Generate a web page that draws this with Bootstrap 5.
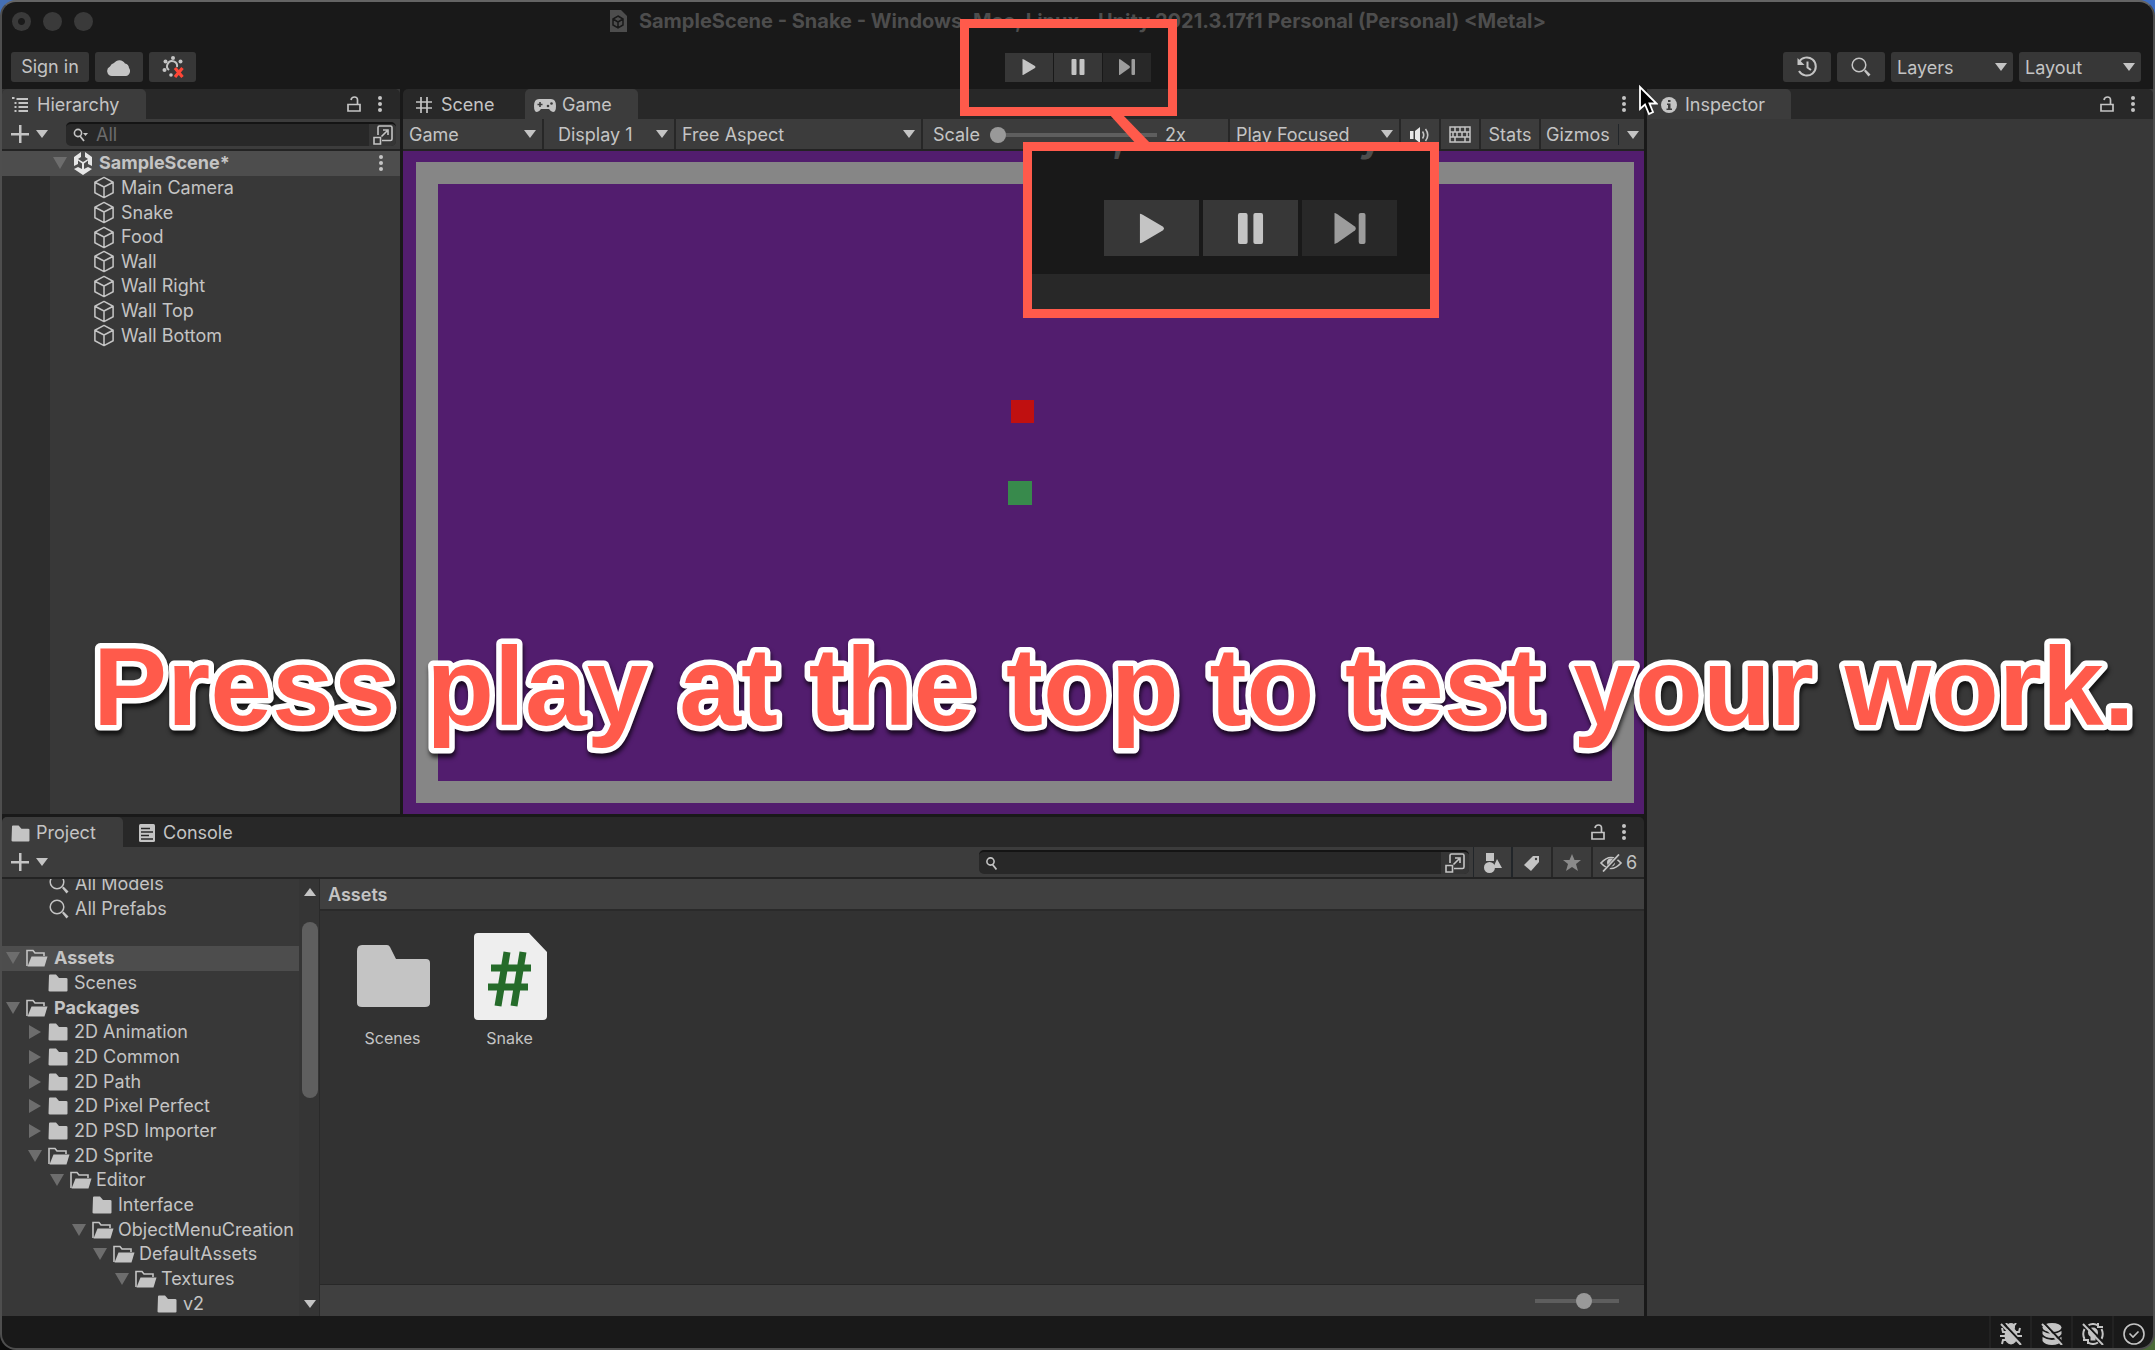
<!DOCTYPE html>
<html lang="en" data-bs-theme="dark">
<head>
<meta charset="utf-8">
<meta name="viewport" content="width=device-width, initial-scale=1">
<title>SampleScene - Snake - Unity Editor</title>
<link href="https://cdn.jsdelivr.net/npm/bootstrap@5.3.0/dist/css/bootstrap.min.css" rel="stylesheet">
<style>
:root{--ink:#c4c4c4;--panel:#383838;--bar:#3c3c3c;--dark:#191919;--strip:#282828;--accent:#ff5a4b}
body{font:18px/24px Inter,"Liberation Sans",sans-serif;color:var(--ink);height:100vh;overflow:hidden;
 background:linear-gradient(90deg,#4570b5 50%,#3f6fc4 50%) top/100% 50% no-repeat,linear-gradient(90deg,#0c0c0c 50%,#4b6a38 50%) bottom/100% 50% no-repeat}
svg{display:block;flex:none;fill:currentColor}
button,select,input{font:inherit;color:inherit;background:none;border:0;padding:0}
.window{height:100vh;background:var(--dark);border:2px solid #4e4e4e;border-top-color:#646464;border-radius:16px;overflow:hidden}
.titlebar{height:42px;display:grid;grid-template-columns:1fr auto 1fr;align-items:center;padding:0 10px 4px;font-weight:700;font-size:20px;color:#4d4d4d}
.dot{width:19px;height:19px;border-radius:50%;background:#3a3a3a}
.dot.edited{background:radial-gradient(#1a1a1a 3px,#3a3a3a 4px)}
.toolbar{height:45px;padding:8px 12px 7px 9px;display:grid;grid-template-columns:1fr auto 1fr;align-items:center}
.tool{height:30px;background:#373737;border-radius:3px;display:flex;align-items:center;justify-content:center}
.play{width:48px;height:29px;background:#373737;display:flex;align-items:center;justify-content:center}
.play.off{background:var(--strip);color:#9c9c9c}
.transport{gap:1px;margin-left:4px}
.gutter{gap:3px}
.tabs{height:30px;background:var(--strip);border-radius:5px 5px 0 0;padding-right:17px}
.tabitem{height:30px;display:flex;align-items:center;gap:9px;border-radius:5px 5px 0 0;padding-top:2px}
.tabitem.on{background:var(--bar)}
.controls{height:32px;background:var(--bar);border-bottom:2px solid #232323}
.controls>.seg{height:30px;display:flex;align-items:center;border-right:2px solid #272727;padding-top:1px}
.controls>.seg:last-child{border-right:0}
.pick{position:relative;display:flex;align-items:center}
.pick select{appearance:none;width:100%;height:30px;padding:1px 0 0 6px;line-height:24px}
.pick::after,.caret{content:"";border:6px solid transparent;border-top:8px solid var(--ink);border-bottom:0}
.pick::after{position:absolute;right:6px;top:11px;pointer-events:none}
.find{height:24px;background:#282828;border-radius:5px;border-top:2px solid #141414;overflow:hidden}
.find input{outline:0;min-width:0}
.find input::placeholder{color:#6c6c6c;opacity:1}
.find button{width:28px;height:24px;background:#353535;display:flex;align-items:center;justify-content:center}
.hierarchy{width:398px;background:var(--panel)}
.rows{list-style:none;margin:0;padding:0;display:flex;flex-direction:column}
.rows li{flex:1 1 0;min-height:0;display:flex;align-items:center;gap:6px;white-space:nowrap}
.rows .chosen{background:#4d4d4d}
.scenelist{height:197px}
.scenelist .obj{padding-left:91px}
.visibility{width:48px;background:#2d2d2d}
.fold{width:14px;height:14px;color:#6d6d6d}
.openf{margin-right:-2px}
.stage{background:#521d6e;padding:11px 10px 11px 13px}
.arena{border:22px solid #868686;position:relative}
.pixel{position:absolute;width:23px;height:23px;left:49%;top:50%}
.pixel.food{background:#c01010;margin:-83px 0 0 -2px}
.pixel.snake{background:#388a4c;width:24px;height:24px;margin:-2px 0 0 -5px}
.project{height:499px}
.tree{width:297px;background:var(--panel);overflow:hidden}
.tree .rows{height:444px}
.d0{padding-left:4px}.d1{padding-left:26px}.d2{padding-left:48px}.d3{padding-left:70px}.d4{padding-left:91px}.d5{padding-left:113px}.d6{padding-left:135px}
.query{padding-left:47px}
.nofold{width:14px}
.scroller{width:21px;background:#353535;border-right:1px solid #2a2a2a}
.thumb{width:16px;height:176px;border-radius:8px;background:#5f5f5f;margin:26px 0 0 3px}
.browser{background:#323232}
.crumb{height:32px;background:#404040;border-bottom:2px solid #2a2a2a;padding:4px 8px 0;font-weight:600}
.assetitem{width:117px;font-size:16px}
.foot{height:32px;background:#404040;border-top:1px solid #282828;padding-right:25px}
input[type=range]{appearance:none;height:20px;background:linear-gradient(#5e5e5e,#5e5e5e) center/100% 4px no-repeat;margin:0}
input[type=range]::-webkit-slider-thumb{appearance:none;width:16px;height:16px;border-radius:50%;background:#999}
.inspector{width:506px;background:var(--panel)}
.status{height:32px}
.status button{width:41px;height:32px;padding-top:4px;border-left:2px solid #222;display:flex;align-items:center;justify-content:center}
.callout{position:absolute;border:9px solid var(--accent)}
.callout.source{left:960px;top:19px;width:217px;height:97px}
.callout.zoomed{left:1023px;top:142px;width:416px;height:176px;background:var(--dark);overflow:hidden}
.zoomed .ghost{position:absolute;left:-4px;top:-38px;font:700 40px/48px Inter,sans-serif;color:#4d4d4d;white-space:nowrap}
.zoomed .big{position:absolute;left:72px;top:49px;gap:4px}
.zoomed .play{width:95px;height:56px}
.zoomed .band{position:absolute;left:0;right:0;bottom:0;height:35px;background:var(--strip)}
.leader,.pointer{position:absolute}
.leader{left:1108px;top:114px}
.pointer{left:1638px;top:84px}
.banner{position:absolute;left:0;top:620px;margin:0;pointer-events:none}
.banner text{font:700 111px "Liberation Sans",Arial,sans-serif;fill:var(--accent);stroke:#fff;stroke-width:11px;paint-order:stroke fill;stroke-linejoin:round}
.banner svg{overflow:visible;filter:drop-shadow(1px 4px 2px rgba(0,0,0,.7))}
</style>
<script src="https://cdn.jsdelivr.net/npm/bootstrap@5.3.0/dist/js/bootstrap.bundle.min.js"></script>
</head>
<body>
<svg width="0" height="0" class="position-absolute" aria-hidden="true">
<symbol id="cube" viewBox="0 0 22 24"><g fill="none" stroke="currentColor" stroke-width="1.6" stroke-linejoin="round"><path d="M11 1.5 20.500 6.500V17.500L11 22.500 1.500 17.500V6.500zM1.500 6.500 11 11.500 20.500 6.500M11 11.500V22.500"/></g></symbol>
<symbol id="folder" viewBox="0 0 20 18"><path d="M1 1.500Q1 .5 2 .5H8L11 4H18Q19.500 4 19.500 5V16.500Q19.500 17.500 18.500 17.500H2Q.5 17.500.5 16.500z"/></symbol>
<symbol id="openfolder" viewBox="0 0 22 18"><path d="M1 17V1.500H7L9 4H18V7" fill="none" stroke="currentColor" stroke-width="1.600"/><path d="M5.500 7.500H21.500L18.500 17.500H1.500z"/></symbol>
<symbol id="down" viewBox="0 0 14 14"><path d="M0 1H14L7 13z"/></symbol>
<symbol id="right" viewBox="0 0 14 14"><path d="M1 0V14L13 7z"/></symbol>
<symbol id="lens" viewBox="0 0 20 20"><circle cx="8" cy="8" r="6.800" fill="none" stroke="currentColor" stroke-width="1.500"/><path d="M13 14 14.500 12.500 19.500 17.500 17.500 19.500z"/></symbol>
<symbol id="kebab" viewBox="0 0 6 18"><circle cx="3" cy="3" r="2"/><circle cx="3" cy="9" r="2"/><circle cx="3" cy="15" r="2"/></symbol>
<symbol id="lock" viewBox="0 0 14 16"><g fill="none" stroke="currentColor" stroke-width="1.700"><path d="M1 8.500H13V15H1zM10.500 8.500V4Q10.500 1 7.500 1T4 4"/></g></symbol>
<symbol id="plus" viewBox="0 0 18 18"><path d="M8 0h2.500v8H18v2.500h-7.500V18H8v-7.500H0V8h8z"/></symbol>
<symbol id="popout" viewBox="0 0 20 20"><g fill="none" stroke="currentColor" stroke-width="1.600"><path d="M5 10V2.500Q5 1 6.500 1H17.500Q19 1 19 2.500V14Q19 15.500 17.500 15.500H9M1 12.500H7.500V19H1zM8.500 11.500 14 6M10 5H15V10"/></g></symbol>
<symbol id="tplay" viewBox="0 0 14 16"><path d="M.5 0Q1 0 2 .6L13 7Q14 8 13 9L2 15.400Q1 16 .5 16z"/></symbol>
<symbol id="tpause" viewBox="0 0 14 16"><rect x=".5" width="5" height="16" rx="1"/><rect x="8.500" width="5" height="16" rx="1"/></symbol>
<symbol id="tstep" viewBox="0 0 16 16"><path d="M0 0Q.5 0 1.500.6L10.500 7Q11.500 8 10.500 9L1.500 15.400Q.5 16 0 16z"/><rect x="12.500" width="3.500" height="16" rx="1"/></symbol>
</svg>

<div class="window d-flex flex-column">
 <header>
  <div class="titlebar">
   <div class="d-flex" style="gap:12px"><span class="dot edited"></span><span class="dot"></span><span class="dot"></span></div>
   <div class="d-flex align-items-center gap-2"><svg width="18" height="22" viewBox="0 0 18 22"><path d="M1 0H12L18 6V22H1z"/><path d="M9 6 14 9V15L9 18 4 15V9zM9 12V18M9 12 4 9M9 12 14 9" fill="none" stroke="#191919" stroke-width="1.500"/></svg><span class="ms-1">SampleScene - Snake - Windows, Mac, Linux - Unity 2021.3.17f1 Personal (Personal) &lt;Metal&gt;</span></div>
   <div></div>
  </div>
  <div class="toolbar">
   <div class="d-flex align-items-center" style="gap:6px">
    <button class="tool px-2" style="min-width:78px">Sign in</button>
    <button class="tool" style="width:48px" aria-label="Cloud"><svg width="24" height="18" viewBox="0 0 24 18"><path d="M5 18A5 5 0 0 1 3 8.500 6 6 0 0 1 7 5 6.500 6.500 0 0 1 18 5.500 5 5 0 0 1 22 10 5 5 0 0 1 19 18z"/></svg></button>
    <button class="tool" style="width:47px" aria-label="Services"><svg width="22" height="22" viewBox="0 0 22 22"><circle cx="11" cy="2" r="2"/><circle cx="3.500" cy="5.500" r="2"/><circle cx="18.500" cy="5.500" r="2"/><circle cx="2.500" cy="14" r="2"/><circle cx="9" cy="19" r="1.800"/><path d="M7 14A5 5 0 1 1 15 11" fill="none" stroke="currentColor" stroke-width="2"/><path d="M13 12 20.500 21M20.500 12 13 21" stroke="#ff4636" stroke-width="3.200"/></svg></button>
   </div>
   <div class="transport d-flex">
    <button class="play" aria-label="Play"><svg width="14" height="16"><use href="#tplay"/></svg></button>
    <button class="play" aria-label="Pause"><svg width="14" height="16"><use href="#tpause"/></svg></button>
    <button class="play off" aria-label="Step"><svg width="16" height="16"><use href="#tstep"/></svg></button>
   </div>
   <div class="d-flex justify-content-end" style="gap:6px">
    <button class="tool" style="width:48px" aria-label="History"><svg width="22" height="22" viewBox="0 0 22 22"><g fill="none" stroke="currentColor" stroke-width="2"><path d="M3 6A9 9 0 1 1 3 15"/><path d="M11.500 5.500V11.500L15 14"/></g><path d="M1.500 2V9H8.500z"/></svg></button>
    <button class="tool" style="width:48px" aria-label="Search"><svg width="20" height="20"><use href="#lens"/></svg></button>
    <label class="tool pick" style="width:122px"><select aria-label="Layers"><option>Layers</option></select></label>
    <label class="tool pick" style="width:122px"><select aria-label="Layout"><option>Layout</option></select></label>
   </div>
  </div>
 </header>

 <main class="d-flex flex-fill gutter" style="min-height:0">
  <div class="d-flex flex-column flex-fill gutter" style="min-width:0">
   <div class="d-flex flex-fill gutter" style="min-height:0">
    <section class="hierarchy d-flex flex-column">
     <div class="tabs d-flex align-items-center">
      <div class="tabitem on" style="width:144px;padding-left:10px;gap:8px"><svg width="17" height="16" viewBox="0 0 17 16"><path d="M0 0h2.500v2H0zM4.500 1H16v2H4.500zM2.500 5h2v2h-2zM6.500 5H16v2H6.500zM2.500 9h2v2h-2zM6.500 9H16v2H6.500zM2.500 13h2v2h-2zM6.500 13H16v2H6.500z"/></svg>Hierarchy</div>
      <svg class="ms-auto" width="14" height="16"><use href="#lock"/></svg><svg style="margin-left:16px" width="6" height="18"><use href="#kebab"/></svg>
     </div>
     <div class="controls d-flex align-items-center" style="padding:0 4px 0 9px">
      <button class="d-flex align-items-center" style="gap:7px" aria-label="Create"><svg width="18" height="18"><use href="#plus"/></svg><i class="caret"></i></button>
      <div class="find d-flex align-items-center flex-fill" style="margin-left:18px;padding-left:7px"><svg width="15" height="14" viewBox="0 0 15 14"><circle cx="5" cy="5" r="3.600" fill="none" stroke="currentColor" stroke-width="1.600"/><path d="M7 8 11 13" stroke="currentColor" stroke-width="1.800"/><path d="M10 5H15L12.500 8z"/></svg><input class="flex-fill ms-2" type="text" placeholder="All" aria-label="Search hierarchy"><button aria-label="Open search"><svg width="20" height="20"><use href="#popout"/></svg></button></div>
     </div>
     <div class="position-relative flex-fill d-flex">
      <div class="visibility"></div>
      <ul class="rows scenelist position-absolute w-100">
       <li class="chosen fw-bold" style="padding:0 16px 0 51px"><svg class="fold"><use href="#down"/></svg><svg width="20" height="23" viewBox="0 0 20 23"><path d="M8 0V5L5 7 10 10 15 7 12 5V0L19 5V14L15 12V8.500L11 11.500V17L15 15 19 17 10 23 1 17 5 15 9 17V11.500L5 8.500V12L1 14V5z" fill="#e6e6e6"/></svg><span>SampleScene*</span><svg class="ms-auto" width="6" height="18"><use href="#kebab"/></svg></li>
       <li class="obj"><svg width="22" height="23"><use href="#cube"/></svg>Main Camera</li>
       <li class="obj"><svg width="22" height="23"><use href="#cube"/></svg>Snake</li>
       <li class="obj"><svg width="22" height="23"><use href="#cube"/></svg>Food</li>
       <li class="obj"><svg width="22" height="23"><use href="#cube"/></svg>Wall</li>
       <li class="obj"><svg width="22" height="23"><use href="#cube"/></svg>Wall Right</li>
       <li class="obj"><svg width="22" height="23"><use href="#cube"/></svg>Wall Top</li>
       <li class="obj"><svg width="22" height="23"><use href="#cube"/></svg>Wall Bottom</li>
      </ul>
     </div>
    </section>
    <section class="d-flex flex-column flex-fill" style="min-width:0">
     <div class="tabs d-flex align-items-center">
      <div class="tabitem" style="width:122px;padding-left:13px"><svg width="16" height="16" viewBox="0 0 16 16"><path d="M5 0V16M11 0V16M0 5H16M0 11H16" stroke="currentColor" stroke-width="1.700"/></svg>Scene</div>
      <div class="tabitem on" style="width:113px;padding-left:9px;gap:6px"><svg width="22" height="13" viewBox="0 0 22 13"><path d="M5 0H17Q22 0 22 7 22 13 19 13 17 13 15 10H7Q5 13 3 13 0 13 0 7 0 0 5 0z"/><path d="M3.500 5.500H8.500M6 3V8" stroke="#3c3c3c" stroke-width="1.600"/><circle cx="14" cy="7" r="1.300" fill="#3c3c3c"/><circle cx="17.500" cy="4.500" r="1.300" fill="#3c3c3c"/></svg>Game</div>
      <svg class="ms-auto" width="6" height="18"><use href="#kebab"/></svg>
     </div>
     <div class="controls d-flex">
      <label class="seg pick" style="width:141px"><select aria-label="View"><option>Game</option></select></label>
      <label class="seg pick" style="width:132px;padding-left:8px"><select aria-label="Display"><option>Display 1</option></select></label>
      <label class="seg pick" style="width:247px"><select aria-label="Aspect"><option>Free Aspect</option></select></label>
      <div class="seg flex-fill" style="padding-left:10px"><label for="scale">Scale</label><input id="scale" type="range" min="1" max="5" value="1" style="width:167px;margin:0 8px 0 10px"><span>2x</span></div>
      <label class="seg pick" style="width:171px"><select aria-label="Play mode"><option>Play Focused</option></select></label>
      <button class="seg justify-content-center" style="width:40px" aria-label="Mute audio"><svg width="20" height="16" viewBox="0 0 20 16"><path d="M0 4H3.500V12H0zM5 4 10 0V16L5 12z" fill="#e8e8e8"/><path d="M12.500 4.500Q15 8 12.500 11.500M15.500 2Q20 8 15.500 14" fill="none" stroke="currentColor" stroke-width="1.600"/></svg></button>
      <button class="seg justify-content-center" style="width:40px" aria-label="Shortcuts"><svg width="22" height="17" viewBox="0 0 22 17"><path d="M1 1H21V16H1zM1 6H21M1 11H21M6 1V6M11 1V6M16 1V6M4 6V11M8 6V11M13 6V11M18 6V11M6 11V16M16 11V16" fill="none" stroke="currentColor" stroke-width="1.500"/></svg></button>
      <button class="seg justify-content-center" style="width:60px">Stats</button>
      <button class="seg" style="width:103px;padding-left:5px">Gizmos<i class="border-start border-dark ms-2 h-75"></i><i class="caret ms-2"></i></button>
     </div>
     <div class="stage flex-fill d-flex"><div class="arena flex-fill"><span class="pixel food"></span><span class="pixel snake"></span></div></div>
    </section>
   </div>

   <section class="project d-flex flex-column">
    <div class="tabs d-flex align-items-center">
     <div class="tabitem on" style="width:121px;padding-left:9px;gap:6px"><svg width="19" height="17"><use href="#folder"/></svg>Project</div>
     <div class="tabitem" style="padding-left:16px;gap:8px"><svg width="16" height="18" viewBox="0 0 16 18"><rect width="16" height="18" rx="1.500"/><path d="M2 4.500H11M2 8H14M2 11.500H10M2 15H14" stroke="#282828" stroke-width="1.500"/></svg>Console</div>
     <svg class="ms-auto" width="14" height="16"><use href="#lock"/></svg><svg style="margin-left:16px" width="6" height="18"><use href="#kebab"/></svg>
    </div>
    <div class="controls d-flex align-items-center" style="padding-left:9px">
     <button class="d-flex align-items-center" style="gap:7px" aria-label="Create"><svg width="18" height="18"><use href="#plus"/></svg><i class="caret"></i></button>
     <div class="find d-flex align-items-center ms-auto me-1" style="width:490px;padding-left:7px"><svg width="11" height="13" viewBox="0 0 11 13"><circle cx="4.500" cy="4.500" r="3.600" fill="none" stroke="currentColor" stroke-width="1.600"/><path d="M6.500 7.500 10.500 12.500" stroke="currentColor" stroke-width="1.800"/></svg><input class="flex-fill ms-2" type="text" aria-label="Search project"><button aria-label="Open search"><svg width="20" height="20"><use href="#popout"/></svg></button></div>
     <button class="seg justify-content-center border-start border-dark" style="width:40px" aria-label="Search by type"><svg width="18" height="20" viewBox="0 0 18 20"><path d="M2 0H10V8H2zM13 6 18 15H9z"/><circle cx="5.500" cy="14.500" r="5.500"/></svg></button>
     <button class="seg justify-content-center" style="width:40px" aria-label="Search by label"><svg width="16" height="16" viewBox="0 0 16 16"><path d="M9 1H15V7L7 16 0 10z"/><circle cx="12" cy="4" r="1.200" fill="#3c3c3c"/></svg></button>
     <button class="seg justify-content-center" style="width:40px;color:#8a8a8a" aria-label="Favorites"><svg width="18" height="17" viewBox="0 0 18 17"><path d="M9 0 11.500 6H18L13 10 15 17 9 13 3 17 5 10 0 6H6.500z"/></svg></button>
     <button class="seg justify-content-center gap-1" style="width:51px"><svg width="22" height="18" viewBox="0 0 22 18"><path d="M1 9Q11-2 21 9 11 20 1 9z" fill="none" stroke="currentColor" stroke-width="1.700"/><circle cx="11" cy="8.500" r="4"/><path d="M4 18 20 0" stroke="#3c3c3c" stroke-width="4"/><path d="M3 17.500 19 .5" stroke="currentColor" stroke-width="1.800"/></svg>6</button>
    </div>
    <div class="d-flex flex-fill" style="min-height:0">
     <div class="tree d-flex flex-column justify-content-end">
      <ul class="rows flex-shrink-0">
       <li class="query"><svg width="20" height="20"><use href="#lens"/></svg>All Models</li>
       <li class="query"><svg width="20" height="20"><use href="#lens"/></svg>All Prefabs</li>
       <li aria-hidden="true"></li>
       <li class="d0 chosen fw-bold"><svg class="fold"><use href="#down"/></svg><svg class="openf me-0" width="22" height="18"><use href="#openfolder"/></svg>Assets</li>
       <li class="d1"><span class="nofold"></span><svg width="20" height="18"><use href="#folder"/></svg>Scenes</li>
       <li class="d0 fw-bold"><svg class="fold"><use href="#down"/></svg><svg class="openf me-0" width="22" height="18"><use href="#openfolder"/></svg>Packages</li>
       <li class="d1"><svg class="fold"><use href="#right"/></svg><svg width="20" height="18"><use href="#folder"/></svg>2D Animation</li>
       <li class="d1"><svg class="fold"><use href="#right"/></svg><svg width="20" height="18"><use href="#folder"/></svg>2D Common</li>
       <li class="d1"><svg class="fold"><use href="#right"/></svg><svg width="20" height="18"><use href="#folder"/></svg>2D Path</li>
       <li class="d1"><svg class="fold"><use href="#right"/></svg><svg width="20" height="18"><use href="#folder"/></svg>2D Pixel Perfect</li>
       <li class="d1"><svg class="fold"><use href="#right"/></svg><svg width="20" height="18"><use href="#folder"/></svg>2D PSD Importer</li>
       <li class="d1"><svg class="fold"><use href="#down"/></svg><svg class="openf" width="22" height="18"><use href="#openfolder"/></svg>2D Sprite</li>
       <li class="d2"><svg class="fold"><use href="#down"/></svg><svg class="openf" width="22" height="18"><use href="#openfolder"/></svg>Editor</li>
       <li class="d3"><span class="nofold"></span><svg width="20" height="18"><use href="#folder"/></svg>Interface</li>
       <li class="d3"><svg class="fold"><use href="#down"/></svg><svg class="openf" width="22" height="18"><use href="#openfolder"/></svg>ObjectMenuCreation</li>
       <li class="d4"><svg class="fold"><use href="#down"/></svg><svg class="openf" width="22" height="18"><use href="#openfolder"/></svg>DefaultAssets</li>
       <li class="d5"><svg class="fold"><use href="#down"/></svg><svg class="openf" width="22" height="18"><use href="#openfolder"/></svg>Textures</li>
       <li class="d6"><span class="nofold"></span><svg width="20" height="18"><use href="#folder"/></svg>v2</li>
      </ul>
     </div>
     <div class="scroller d-flex flex-column"><svg width="12" height="8" viewBox="0 0 12 8" style="margin:9px 0 0 5px"><path d="M0 8H12L6 0z"/></svg><div class="thumb"></div><svg class="mt-auto" width="12" height="8" viewBox="0 0 12 8" style="margin:0 0 8px 5px"><path d="M0 0H12L6 8z"/></svg></div>
     <div class="browser d-flex flex-column flex-fill">
      <div class="crumb">Assets</div>
      <div class="d-flex flex-fill" style="padding:21px 0 0 14px">
       <div class="assetitem d-flex flex-column align-items-center"><svg width="74" height="90" viewBox="0 0 74 90"><path d="M1 19Q1 13 6 13H31Q33 13 34 15L40 27H70Q74 27 74 31V71Q74 75 69 75H6Q1 75 1 71z"/></svg><span class="pt-1">Scenes</span></div>
       <div class="assetitem d-flex flex-column align-items-center"><svg width="74" height="90" viewBox="0 0 74 90"><path d="M4 1H56L74 20V84Q74 88 70 88H5Q1 88 1 84V5Q1 1 5 1z" fill="#eee"/><path d="M34 20 25 74M50 20 41 74M18 36H58M15 55H55" fill="none" stroke="#256b2a" stroke-width="7"/></svg><span class="pt-1">Snake</span></div>
      </div>
      <div class="foot d-flex align-items-center justify-content-end"><input type="range" min="0" max="100" value="60" aria-label="Icon size" style="width:84px"></div>
     </div>
    </div>
   </section>
  </div>

  <aside class="inspector d-flex flex-column">
   <div class="tabs d-flex align-items-center">
    <div class="tabitem on" style="width:144px;padding-left:14px;gap:8px"><svg width="16" height="16" viewBox="0 0 16 16"><circle cx="8" cy="8" r="8"/><path d="M7 3H9.500V5H7zM6 6.500H9.500V11.500H11V13H5.500V11.500H7V8H6z" fill="#3c3c3c"/></svg>Inspector</div>
    <svg class="ms-auto" width="14" height="16"><use href="#lock"/></svg><svg style="margin-left:16px" width="6" height="18"><use href="#kebab"/></svg>
   </div>
  </aside>
 </main>

 <footer class="status d-flex justify-content-end">
  <button aria-label="Debugger"><svg width="22" height="22" viewBox="0 0 22 22"><ellipse cx="11" cy="13" rx="6.500" ry="8.500"/><circle cx="11" cy="4" r="4"/><path d="M6 0 9 4M16 0 13 4M2 5 3 9H19L20 5M0 13H22M2 21 3 17H19L20 21" fill="none" stroke="currentColor" stroke-width="2"/><path d="M3 0 23 21" stroke="#191919" stroke-width="2"/><path d="M1 1 21 22" stroke="currentColor" stroke-width="2"/></svg></button>
  <button aria-label="Cache server"><svg width="22" height="22" viewBox="0 0 22 22"><ellipse cx="11" cy="4.500" rx="9.500" ry="4.500"/><path d="M1.500 8Q11 14 20.500 8V11Q18 15 11 15T1.500 11zM1.500 14Q11 20 20.500 14V18Q18 22 11 22T1.500 18z"/><path d="M3 0 23 21" stroke="#191919" stroke-width="2"/><path d="M1 1 21 22" stroke="currentColor" stroke-width="2"/></svg></button>
  <button aria-label="Auto lighting"><svg width="22" height="22" viewBox="0 0 22 22"><path d="M6 2.500Q11-.5 16 2.500M19.500 6Q22 11 19.500 16M16 19.500Q11 22.500 6 19.500M2.500 16Q0 11 2.500 6M16 0V4H21M1 17H6V21" fill="none" stroke="currentColor" stroke-width="2"/><circle cx="11" cy="9.500" r="5"/><path d="M8.500 13H13.500V17.500H8.500z"/><path d="M3 0 23 21" stroke="#191919" stroke-width="2"/><path d="M1 1 21 22" stroke="currentColor" stroke-width="2"/></svg></button>
  <button aria-label="Progress"><svg width="22" height="22" viewBox="0 0 22 22"><g fill="none" stroke="currentColor" stroke-width="1.600"><circle cx="11" cy="11" r="10"/><path d="M6.500 10.500 10 14 15.500 8.500"/></g></svg></button>
 </footer>
</div>

<div class="callout source"></div>
<svg class="leader" width="44" height="32" viewBox="0 0 44 32" style="color:#ff5a4b"><path d="M1 0H14L44 31H29z"/></svg>
<div class="callout zoomed">
 <span class="ghost" aria-hidden="true">Mac, Linux - Unity</span>
 <div class="band"></div>
 <div class="big d-flex">
  <span class="play"><svg width="26" height="31"><use href="#tplay"/></svg></span>
  <span class="play"><svg width="27" height="31"><use href="#tpause"/></svg></span>
  <span class="play off"><svg width="32" height="31"><use href="#tstep"/></svg></span>
 </div>
</div>
<svg class="pointer" width="20" height="32" viewBox="0 0 20 32"><path d="M2 3V25L7 20.500 11 30 15 28 11.500 19.500H18.500z" fill="#000" stroke="#fff" stroke-width="1.800"/></svg>
<h1 class="banner"><svg width="2140" height="150"><text x="93" y="105">Press play at the top to test your work.</text></svg></h1>
</body>
</html>
